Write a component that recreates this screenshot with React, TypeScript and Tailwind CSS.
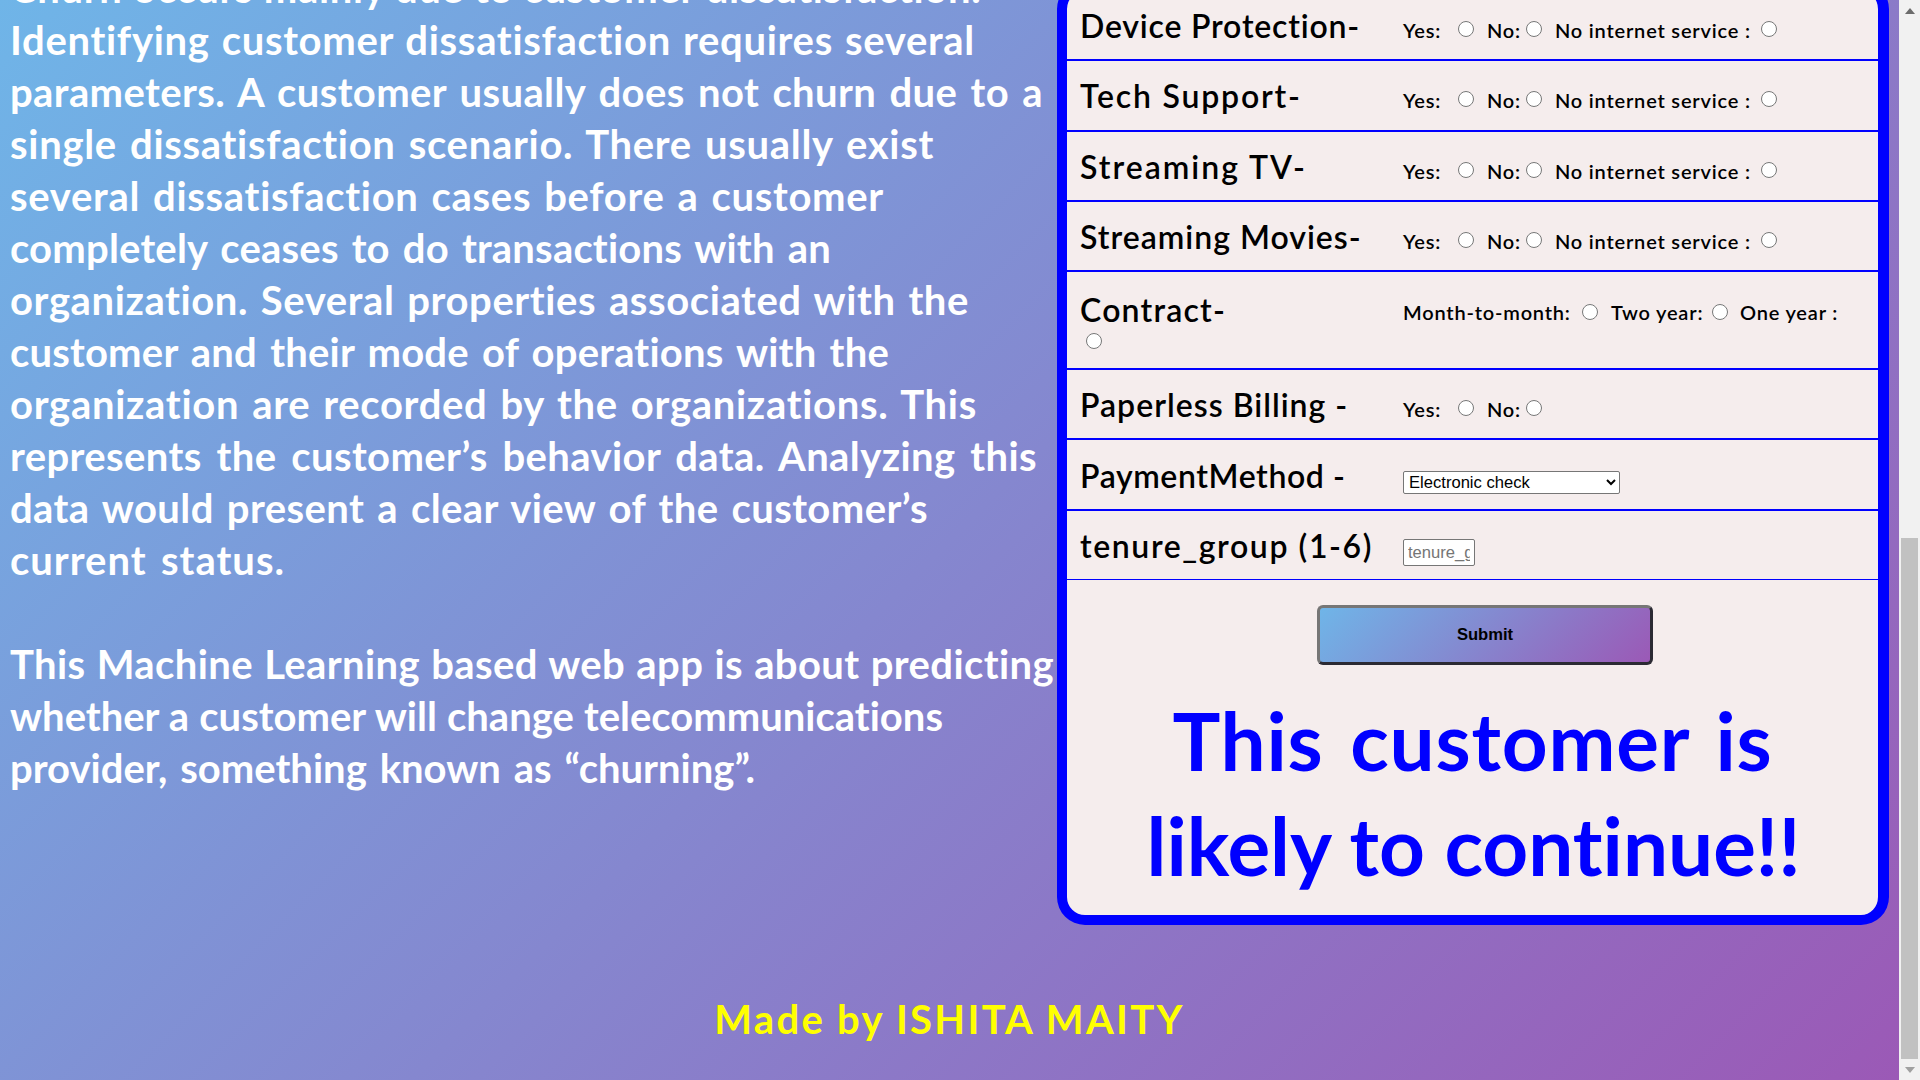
// App.tsx
const introLines = [
  { text: 'Churn occurs mainly due to customer dissatisfaction.', style: 'w-[964px] tracking-[0.7px]' },
  { text: 'Identifying customer dissatisfaction requires several', style: 'w-[965px] tracking-[0.7px]' },
  { text: 'parameters. A customer usually does not churn due to a', style: 'w-[1033px] tracking-[0.4px]' },
  { text: 'single dissatisfaction scenario. There usually exist', style: 'w-[924px] tracking-[0.7px]' },
  { text: 'several dissatisfaction cases before a customer', style: 'w-[874px] tracking-[0.7px]' },
  { text: 'completely ceases to do transactions with an', style: 'w-[821px] tracking-[0.2px]' },
  { text: 'organization. Several properties associated with the', style: 'w-[959px] tracking-[0.6px]' },
  { text: 'customer and their mode of operations with the', style: 'w-[879px] tracking-[0.2px]' },
  { text: 'organization are recorded by the organizations. This', style: 'w-[967px] tracking-[0.7px]' },
  { text: 'represents the customer’s behavior data. Analyzing this', style: 'w-[1027px] tracking-[0.4px]' },
  { text: 'data would present a clear view of the customer’s', style: 'w-[918px] tracking-[0.4px]' },
  { text: 'current status.', style: 'w-[275px] tracking-[1px]' },
]

const aboutLines = [
  { text: 'This Machine Learning based web app is about predicting', style: 'w-[1044px] tracking-[0.4px]' },
  { text: 'whether a customer will change telecommunications', style: 'w-[933px]' },
  { text: 'provider, something known as “churning”.', style: 'w-[745px]' },
]

function Radio() {
  return <input type="radio" className="w-4 h-4 shrink-0" />
}

function ServiceOptions({ name }: { name: string }) {
  return (
    <div className="flex items-center text-[20px] tracking-[0.8px] font-semibold">
      <span className="w-[55px] pt-[2px]">Yes:</span>
      <Radio />
      <span className="ml-[13px] w-[39px] pt-[2px]">No:</span>
      <Radio />
      <span className="ml-[13px] w-[206px] pt-[2px] whitespace-nowrap">No internet service :</span>
      <input type="radio" name={name} className="w-4 h-4 shrink-0" />
    </div>
  )
}

function Row({ label, tracking, children }: { label: string; tracking: string; children: React.ReactNode }) {
  return (
    <div className="flex items-center h-[70.3px] border-b-2 border-[#0000ff] pl-[13px]">
      <div className={`w-[323px] shrink-0 text-[32px] font-semibold whitespace-nowrap mt-[2px] ${tracking}`}>{label}</div>
      <div className="mt-[8px]">{children}</div>
    </div>
  )
}

function ScrollArrow({ up, color }: { up?: boolean; color: string }) {
  return (
    <div className="h-[21px] flex items-center justify-center">
      <svg width="10" height="6" viewBox="0 0 10 6">
        <path d={up ? 'M5 0 L10 6 L0 6 Z' : 'M0 0 L10 0 L5 6 Z'} fill={color} />
      </svg>
    </div>
  )
}

export default function App() {
  return (
    <div className="h-screen overflow-hidden flex font-['Lato',sans-serif] [font-variant-ligatures:none] text-black">
      <main className="flex-1 min-w-0 h-full overflow-hidden bg-linear-135/srgb from-[#6fb5e8] to-[#9b59b6]">
        <div className="-mt-[38px] flex items-start">
          {/* intro text */}
          <div className="w-[1057px] shrink-0 pl-[10px] text-[40px] leading-[52px] font-bold text-white whitespace-nowrap [text-align-last:justify]">
            {introLines.map((line) => (
              <div key={line.text} className={line.style}>
                {line.text}
              </div>
            ))}
            <div className="h-[52px]" />
            {aboutLines.map((line) => (
              <div key={line.text} className={line.style}>
                {line.text}
              </div>
            ))}
          </div>

          {/* prediction form */}
          <div className="mt-[19px] w-[832px] shrink-0 border-[10px] border-r-[11px] border-[#0000ff] rounded-[28px] bg-[#f5eded]">
            <Row label="Device Protection-" tracking="tracking-[0.8px]">
              <ServiceOptions name="device" />
            </Row>
            <Row label="Tech Support-" tracking="tracking-[1.8px]">
              <ServiceOptions name="tech" />
            </Row>
            <Row label="Streaming TV-" tracking="tracking-[2px]">
              <ServiceOptions name="tv" />
            </Row>
            <Row label="Streaming Movies-" tracking="tracking-[1px]">
              <ServiceOptions name="movies" />
            </Row>

            <div className="h-[98px] border-b-2 border-[#0000ff] pl-[13px] pt-[17px]">
              <div className="flex items-center">
                <div className="w-[323px] shrink-0 -mt-[3px] text-[32px] tracking-[1.2px] font-semibold">Contract-</div>
                <div className="flex items-center text-[20px] tracking-[0.8px] font-semibold whitespace-nowrap">
                  <span className="w-[179px]">Month-to-month:</span>
                  <Radio />
                  <span className="ml-[13px] w-[101px]">Two year:</span>
                  <Radio />
                  <span className="ml-[12px]">One year :</span>
                </div>
              </div>
              <div className="pl-[6px] -mt-[1px] flex">
                <Radio />
              </div>
            </div>

            <Row label="Paperless Billing -" tracking="tracking-[1px]">
              <div className="flex items-center text-[20px] tracking-[0.8px] font-semibold">
                <span className="w-[55px] pt-[2px]">Yes:</span>
                <Radio />
                <span className="ml-[13px] w-[39px] pt-[2px]">No:</span>
                <Radio />
              </div>
            </Row>
            <Row label="PaymentMethod -" tracking="tracking-[0.6px]">
              <select className="block mt-[8px] w-[217px] h-[23px] border border-[#767676] rounded-[2px] bg-white text-[16.6px] leading-none font-['Liberation_Sans',sans-serif] pl-[1px]">
                <option>Electronic check</option>
              </select>
            </Row>
            <div className="flex items-center h-[69px] border-b border-[#0000ff] pl-[13px]">
              <div className="w-[323px] shrink-0 text-[32px] tracking-[1.6px] font-semibold whitespace-nowrap mt-[2px]">tenure_group (1-6)</div>
              <input
                placeholder="tenure_group"
                className="mt-[16px] w-[72px] h-[27px] border border-[#767676] rounded-[2px] bg-white px-[4px] text-[16.6px] font-['Liberation_Sans',sans-serif] placeholder:text-[#757575]"
              />
            </div>

            <div className="flex justify-center pt-[25px]">
              <button className="ml-[25px] w-[336px] h-[60px] pt-[2px] border-[3px] border-t-[#767676] border-l-[#767676] border-r-[#2b2a33] border-b-[#2b2a33] rounded-[6px] bg-linear-135/srgb from-[#6fb5e8] to-[#9b59b6] text-[16.6px] font-bold font-['Liberation_Sans',sans-serif]">
                Submit
              </button>
            </div>

            <div className="mt-[23px] pb-[17px] flex flex-col items-center text-[80px] leading-[105px] font-bold text-[#0000ff] whitespace-nowrap [text-align-last:justify]">
              <div className="w-[600px] tracking-[0.8px]">This customer is</div>
              <div className="w-[652px]">likely to continue!!</div>
            </div>
          </div>
        </div>

        <footer className="mt-[68px] text-center text-[40px] leading-[52px] tracking-[2.3px] font-bold text-[#ffff00]">
          Made by ISHITA MAITY
        </footer>
      </main>

      {/* scrollbar */}
      <div className="w-[21px] shrink-0 h-full bg-[#f1f1f1] flex flex-col">
        <ScrollArrow up color="#6b6b6b" />
        <div className="mt-[517px] mx-[2px] h-[521px] bg-[#c1c1c1]" />
        <ScrollArrow color="#a0a0a0" />
      </div>
    </div>
  )
}
